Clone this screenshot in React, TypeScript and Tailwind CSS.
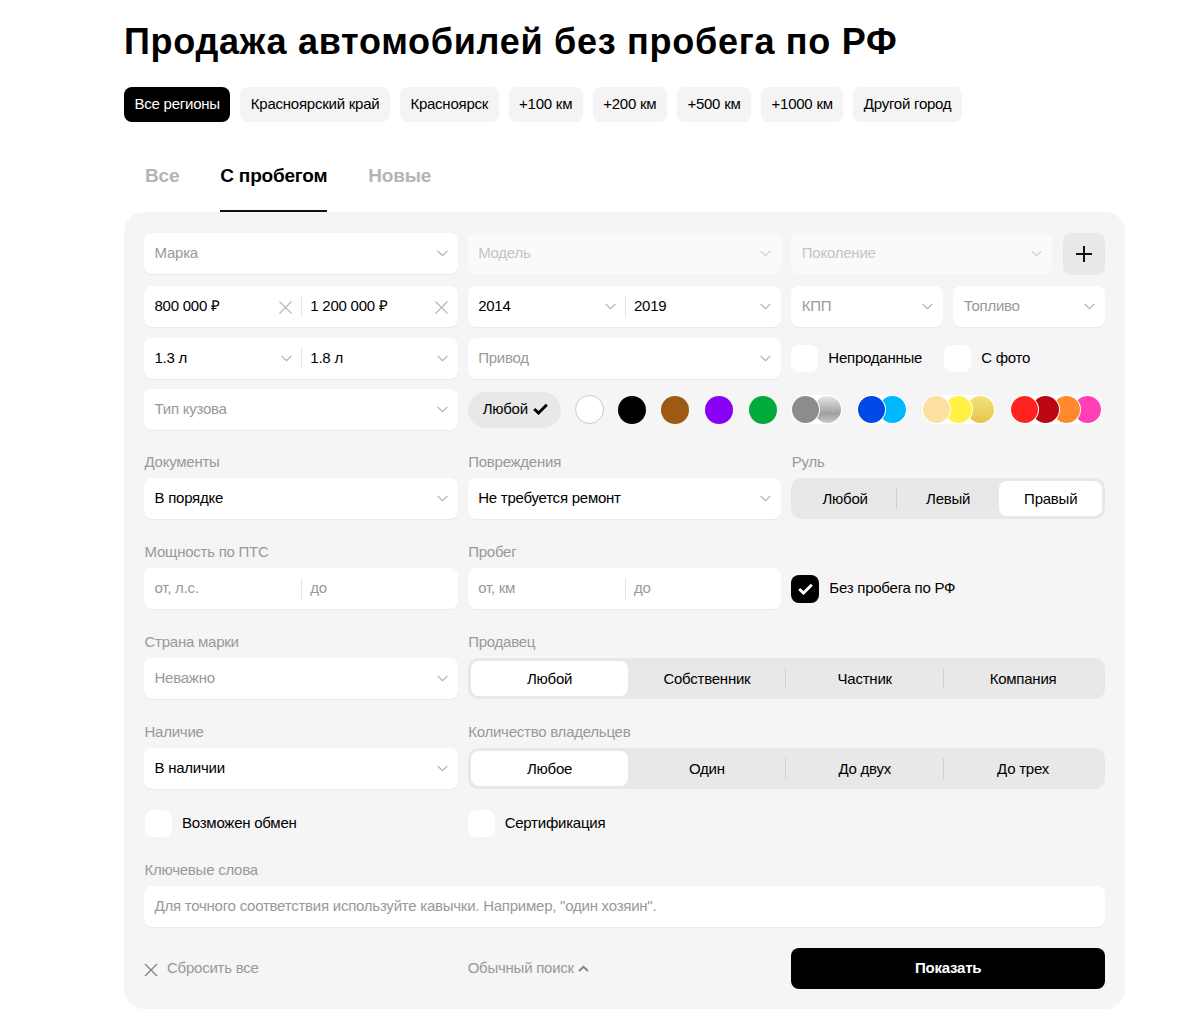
import type { ReactNode } from "react";

const chips = ["Все регионы", "Красноярский край", "Красноярск", "+100 км", "+200 км", "+500 км", "+1000 км", "Другой город"];

const Chevron = ({ className = "text-[#b0b0b0]" }: { className?: string }) => (
  <svg width="11" height="7" viewBox="0 0 11 7" fill="none" className={`shrink-0 ${className}`}>
    <path d="M.6.8 5.5 5.7 10.4.8" stroke="currentColor" strokeWidth="1.2" />
  </svg>
);

const Cross = () => (
  <svg width="13" height="13" viewBox="0 0 13 13" fill="none" className="mt-[2px] shrink-0 text-[#b8b8b8]">
    <path d="M.5.5 12.5 12.5M12.5.5 .5 12.5" stroke="currentColor" strokeWidth="1.2" />
  </svg>
);

const Check = ({ className = "" }: { className?: string }) => (
  <svg width="15" height="12" viewBox="0 0 15 12" fill="none" className={className}>
    <path d="M1.2 6 5.5 10 13.8 1.8" stroke="currentColor" strokeWidth="3" />
  </svg>
);

function Box({ children, className = "" }: { children: ReactNode; className?: string }) {
  return <div className={`flex h-[41px] items-center rounded-lg pb-px shadow-[0_1px_1px_rgba(0,0,0,0.05)] ${className}`}>{children}</div>;
}

function Select({ text, filled, disabled }: { text: string; filled?: boolean; disabled?: boolean }) {
  return (
    <Box className={`justify-between pl-[10.5px] pr-[10px] ${disabled ? "bg-[#fafafa] shadow-none" : "bg-white"}`}>
      <span className={disabled ? "text-[#c4c4c4]" : filled ? "text-black" : "text-[#999999]"}>{text}</span>
      <Chevron className={disabled ? "text-[#d0d0d0]" : "text-[#b0b0b0]"} />
    </Box>
  );
}

function Double({ left, right, filled }: { left: ReactNode; right: ReactNode; filled?: boolean }) {
  return (
    <Box className={`bg-white ${filled ? "text-black" : "text-[#999999]"}`}>
      <div className="flex h-full min-w-0 flex-1 items-center justify-between pl-[10.5px] pr-[9px]">{left}</div>
      <div className="h-[21px] w-px bg-[#e4e4e4]" />
      <div className="flex h-full min-w-0 flex-1 items-center justify-between pl-[8.5px] pr-[10px]">{right}</div>
    </Box>
  );
}

function Label({ children }: { children: ReactNode }) {
  return <div className="mb-[6px] h-[21px] pl-[0.5px] leading-[21px] text-[#999999]">{children}</div>;
}

function Tick({ text, className = "" }: { text: string; className?: string }) {
  return (
    <div className={`flex items-center gap-[10px] ${className}`}>
      <div className="h-[27px] w-[27px] rounded-lg bg-white" />
      <span className="pb-px text-black">{text}</span>
    </div>
  );
}

function Segments({ items, active }: { items: string[]; active: number }) {
  return (
    <div className="flex h-[41px] items-center rounded-[10px] bg-[#e8e8e8] px-[3px]">
      {items.map((item, i) => {
        const showLine = i < items.length - 1 && i !== active && i + 1 !== active;
        return (
          <div key={item} className="flex h-[35px] flex-1 items-center">
            <div className={`flex h-full flex-1 items-center justify-center rounded-lg text-black ${i === active ? "bg-white" : ""}`}>{item}</div>
            {showLine && <div className="h-[21px] w-px bg-[#d0d0d0]" />}
          </div>
        );
      })}
    </div>
  );
}

function Dots({ colors, overlap = "-ml-[5px]" }: { colors: string[]; overlap?: string }) {
  return (
    <div className="flex rounded-full bg-white p-px">
      {colors.map((c, i) => (
        <div
          key={c}
          className={`relative h-[27px] w-[27px] rounded-full ring-1 ring-white ${i > 0 ? overlap : ""}`}
          style={{ background: c, zIndex: colors.length - i }}
        />
      ))}
    </div>
  );
}

export default function App() {
  return (
    <div className="min-h-[1017px] bg-white font-['Liberation_Sans',Arial,sans-serif] text-[15px] leading-[20px] tracking-[-0.24px]">
      <div className="ml-[124px] w-[1001px] pt-[18px]">
        <h1 className="h-[47px] text-[36px] font-bold leading-[47px] tracking-[0.72px] text-black">Продажа автомобилей без пробега по РФ</h1>
        <div className="mt-[22px] flex gap-[10px]">
          {chips.map((c, i) => (
            <div key={c} className={`flex h-[35px] items-center rounded-lg px-[10.5px] pb-px ${i === 0 ? "bg-black text-white" : "bg-[#f4f4f4] text-black"}`}>
              {c}
            </div>
          ))}
        </div>
        <div className="mt-[30px] flex h-[60px] gap-[41px] pl-[21px] text-[19px] font-bold leading-[48px] tracking-[-0.2px]">
          <span className="text-[#b4b4b4]">Все</span>
          <span className="border-b-2 border-[#111111] text-black">С пробегом</span>
          <span className="text-[#b4b4b4]">Новые</span>
        </div>

        <div className="h-[797px] rounded-[20px] bg-[#f5f5f5] px-[20px] pt-[21px]">
          <div className="grid grid-cols-3 gap-x-[10px] gap-y-[11px]">
            <Select text="Марка" />
            <Select text="Модель" disabled />
            <div className="flex gap-[11px]">
              <div className="flex-1">
                <Select text="Поколение" disabled />
              </div>
              <div className="flex h-[42px] w-[42px] items-center justify-center rounded-lg bg-[#e8e8e8]">
                <svg width="18" height="18" viewBox="0 0 18 18" fill="none">
                  <path d="M9 1v16M1 9h16" stroke="#111" strokeWidth="2" />
                </svg>
              </div>
            </div>

            <Double
              filled
              left={
                <>
                  <span>800 000 ₽</span>
                  <Cross />
                </>
              }
              right={
                <>
                  <span>1 200 000 ₽</span>
                  <Cross />
                </>
              }
            />
            <Double
              filled
              left={
                <>
                  <span>2014</span>
                  <Chevron />
                </>
              }
              right={
                <>
                  <span>2019</span>
                  <Chevron />
                </>
              }
            />
            <div className="grid grid-cols-2 gap-[10px]">
              <Select text="КПП" />
              <Select text="Топливо" />
            </div>

            <Double
              filled
              left={
                <>
                  <span>1.3 л</span>
                  <Chevron />
                </>
              }
              right={
                <>
                  <span>1.8 л</span>
                  <Chevron />
                </>
              }
            />
            <Select text="Привод" />
            <div className="flex items-center gap-[22px]">
              <Tick text="Непроданные" />
              <Tick text="С фото" />
            </div>
          </div>

          <div className="mt-[10px] grid grid-cols-3 gap-x-[10px]">
            <Select text="Тип кузова" />
            <div className="col-span-2 flex items-center">
              <div className="flex h-[36px] w-[93px] items-center gap-[5px] rounded-full bg-[#e8e8e8] pb-px pl-[15px] text-black">
                Любой
                <Check />
              </div>
              <div className="ml-[14px] h-[29px] w-[29px] rounded-full border border-[#c8c8d0] bg-white" />
              <div className="ml-[14px] flex gap-[15.7px]">
                <div className="h-[28px] w-[28px] rounded-full bg-black" />
                <div className="h-[28px] w-[28px] rounded-full bg-[#9c5a12]" />
                <div className="h-[28px] w-[28px] rounded-full bg-[#8a00f5]" />
                <div className="h-[28px] w-[28px] rounded-full bg-[#00aa3c]" />
              </div>
              <div className="ml-[14px] flex items-center gap-[15px]">
                <Dots colors={["#8c8c8c", "linear-gradient(#e6e6e6, #a0a0a0 65%, #c8c8c8)"]} />
                <Dots colors={["#0049e6", "#00b8ff"]} overlap="-ml-[6px]" />
                <Dots colors={["#fddfa0", "#fff244", "linear-gradient(#f4e27c, #e2c64a)"]} />
                <Dots colors={["#ff231f", "#bb0613", "#ff8a2c", "#ff40b4"]} overlap="-ml-[6px]" />
              </div>
            </div>
          </div>

          <div className="mt-[21px] grid grid-cols-3 gap-x-[10px] gap-y-[22px]">
            <div>
              <Label>Документы</Label>
              <Select text="В порядке" filled />
            </div>
            <div>
              <Label>Повреждения</Label>
              <Select text="Не требуется ремонт" filled />
            </div>
            <div>
              <Label>Руль</Label>
              <Segments items={["Любой", "Левый", "Правый"]} active={2} />
            </div>

            <div>
              <Label>Мощность по ПТС</Label>
              <Double left={<span>от, л.с.</span>} right={<span>до</span>} />
            </div>
            <div>
              <Label>Пробег</Label>
              <Double left={<span>от, км</span>} right={<span>до</span>} />
            </div>
            <div className="flex items-end">
              <div className="flex h-[41px] items-center gap-[10px]">
                <div className="flex h-[28px] w-[28px] items-center justify-center rounded-lg bg-black text-white">
                  <Check />
                </div>
                <span className="pb-px text-black">Без пробега по РФ</span>
              </div>
            </div>

            <div>
              <Label>Страна марки</Label>
              <Select text="Неважно" />
            </div>
            <div className="col-span-2">
              <Label>Продавец</Label>
              <Segments items={["Любой", "Собственник", "Частник", "Компания"]} active={0} />
            </div>

            <div>
              <Label>Наличие</Label>
              <Select text="В наличии" filled />
            </div>
            <div className="col-span-2">
              <Label>Количество владельцев</Label>
              <Segments items={["Любое", "Один", "До двух", "До трех"]} active={0} />
            </div>
          </div>

          <div className="mt-[21px] grid h-[27px] grid-cols-3 gap-x-[10px]">
            <Tick text="Возможен обмен" className="pl-px" />
            <Tick text="Сертификация" />
          </div>

          <div className="mt-[22px]">
            <Label>Ключевые слова</Label>
            <Box className="bg-white pl-[10.5px] text-[#999999]">Для точного соответствия используйте кавычки. Например, "один хозяин".</Box>
          </div>

          <div className="mt-[21px] grid grid-cols-3 items-center gap-x-[10px] text-[#999999]">
            <div className="flex items-center gap-[9px]">
              <svg width="14" height="14" viewBox="0 0 14 14" fill="none" className="mt-[2px]">
                <path d="M1 1 13 13M13 1 1 13" stroke="#808080" strokeWidth="1.3" />
              </svg>
              <span className="pb-px">Сбросить все</span>
            </div>
            <div className="flex items-center gap-[4px]">
              <span className="pb-px">Обычный поиск</span>
              <svg width="11" height="8" viewBox="0 0 11 8" fill="none">
                <path d="M1 6 5.5 1.8 10 6" stroke="#808080" strokeWidth="1.8" />
              </svg>
            </div>
            <div className="flex h-[41px] items-center justify-center rounded-lg bg-black pb-px font-bold text-white">Показать</div>
          </div>
        </div>
      </div>
    </div>
  );
}
